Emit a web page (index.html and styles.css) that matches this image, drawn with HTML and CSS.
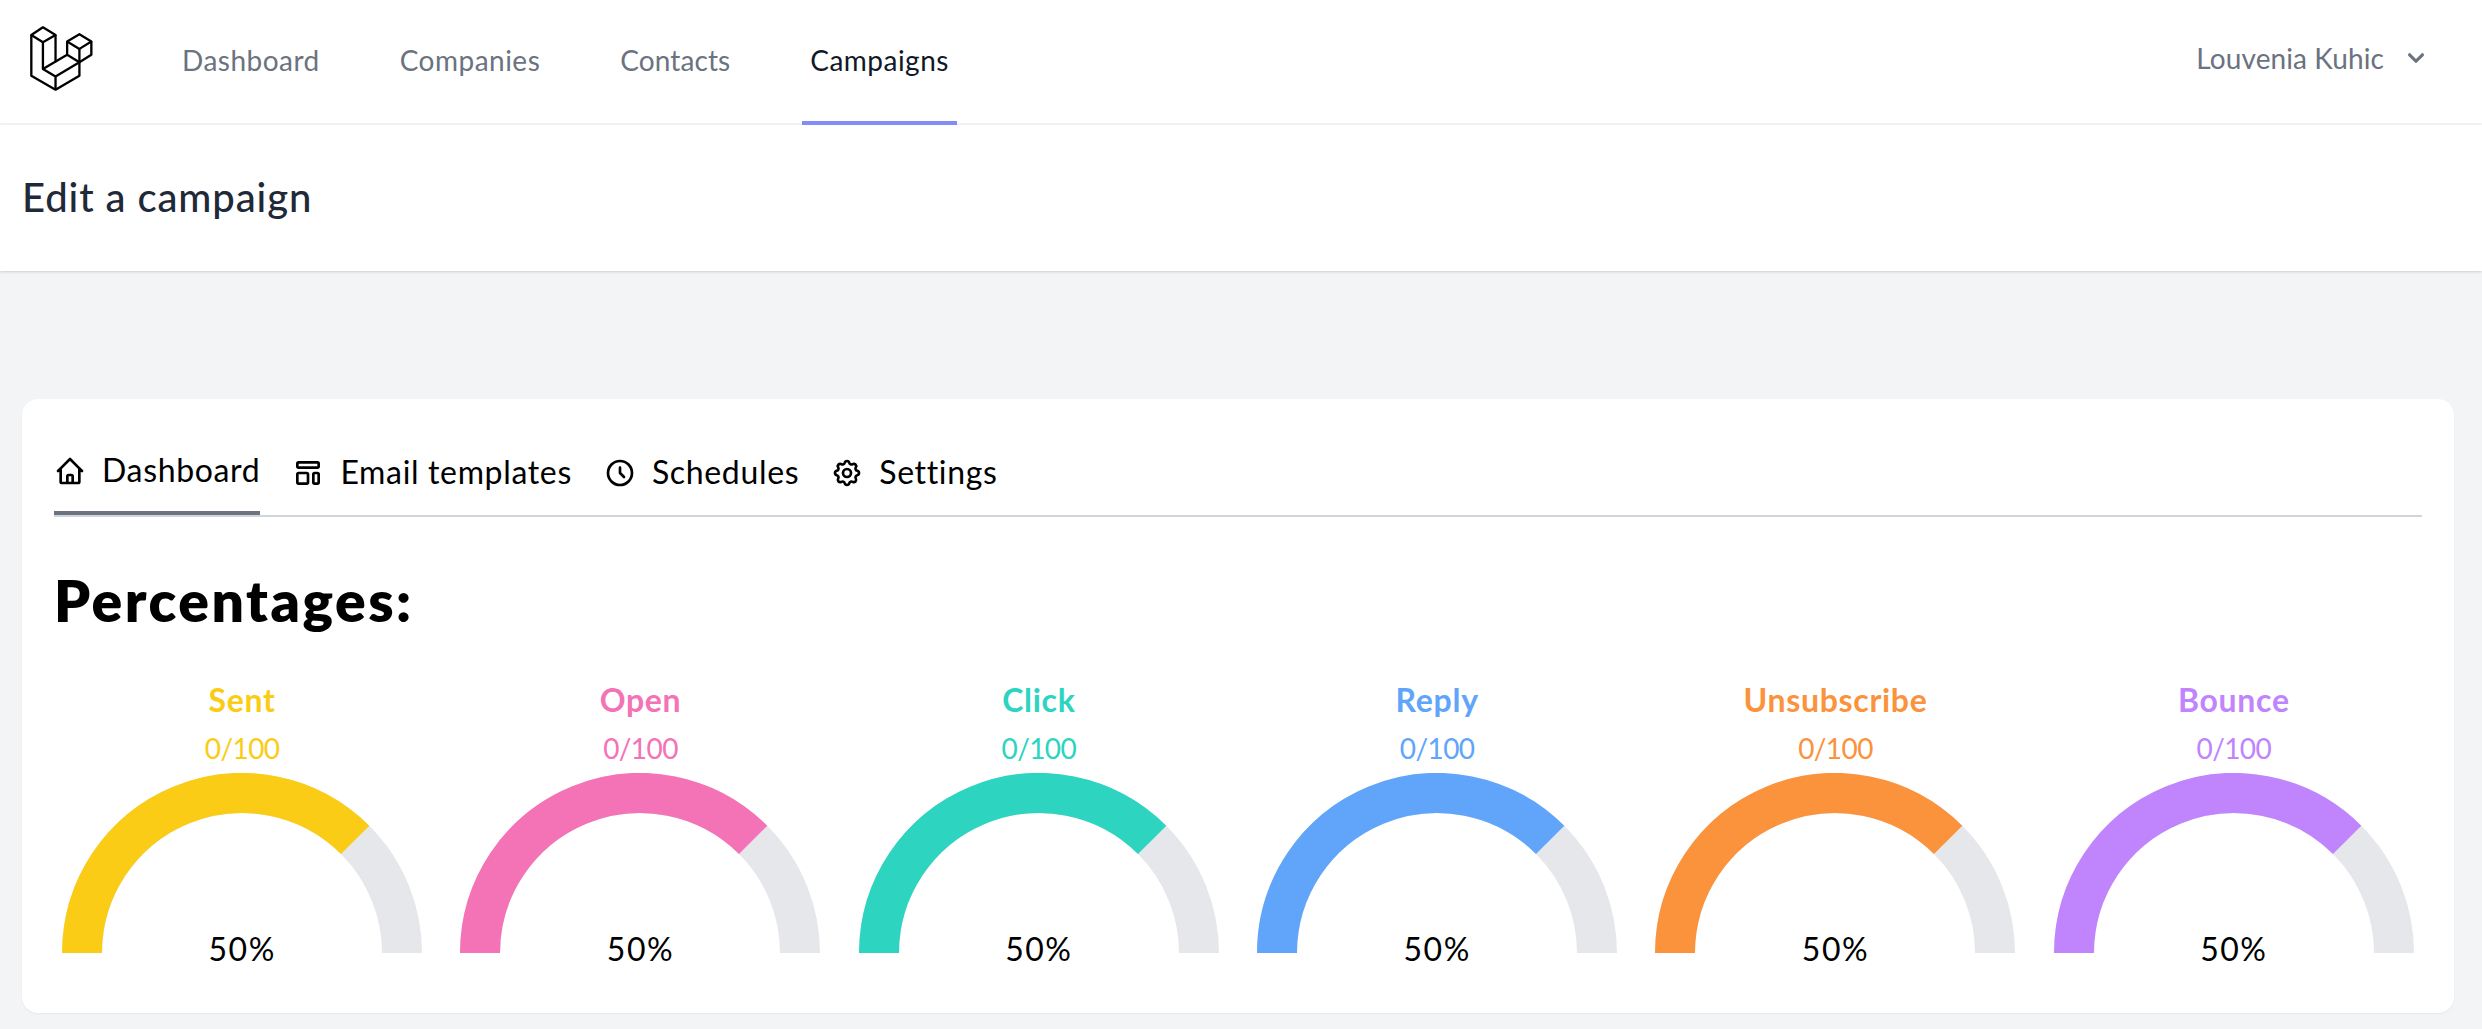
FILE: index.html
```html
<!DOCTYPE html>
<html lang="en">
<head>
    <meta charset="UTF-8">
    <meta name="viewport" content="width=device-width, initial-scale=1.0">
    <title>Edit a campaign</title>
    <link rel="stylesheet" href="styles.css">
</head>
<body>
    <nav class="top-nav">
        <svg class="logo" viewBox="88 78 190 196" fill="none" stroke="#000" stroke-width="7" stroke-linejoin="round">
            <path d="M127 82L165 105L127 127L92 105Z"/>
            <path d="M92 105V228L165 270L237 228V187"/>
            <path d="M127 127V208L165 230V270"/>
            <path d="M165 105V187"/>
            <path d="M127 208L200 165"/>
            <path d="M165 230L237 187"/>
            <path d="M237 103L273 125L237 147L200 125Z"/>
            <path d="M200 125V165L237 187L273 165V125"/>
            <path d="M237 147V187"/>
        </svg>
        <div class="nav-links">
            <a class="nav-link" href="#">Dashboard</a>
            <a class="nav-link" href="#">Companies</a>
            <a class="nav-link contacts" href="#">Contacts</a>
            <a class="nav-link active" href="#">Campaigns</a>
        </div>
        <div class="user-menu">
            <span>Louvenia Kuhic</span>
            <svg class="chevron" viewBox="0 0 20 20" fill="currentColor">
                <path fill-rule="evenodd" clip-rule="evenodd" d="M5.293 7.293a1 1 0 011.414 0L10 10.586l3.293-3.293a1 1 0 111.414 1.414l-4 4a1 1 0 01-1.414 0l-4-4a1 1 0 010-1.414z"/>
            </svg>
        </div>
    </nav>

    <header class="page-header">
        <h1>Edit a campaign</h1>
    </header>

    <main class="content">
        <section class="card">
            <div class="tabs">
                <a class="tab active" href="#">
                    <svg class="tab-icon" viewBox="0 0 24 24"><path d="M3 12l2-2m0 0l7-7 7 7M5 10v10a1 1 0 001 1h3m10-11l2 2m-2-2v10a1 1 0 01-1 1h-3m-6 0a1 1 0 001-1v-4a1 1 0 011-1h2a1 1 0 011 1v4a1 1 0 001 1m-6 0h6"/></svg>
                    <span class="tab-text">Dashboard</span>
                </a>
                <a class="tab" href="#">
                    <svg class="tab-icon" viewBox="0 0 24 24"><path d="M4 5a1 1 0 011-1h14a1 1 0 011 1v2a1 1 0 01-1 1H5a1 1 0 01-1-1V5zM4 13a1 1 0 011-1h6a1 1 0 011 1v6a1 1 0 01-1 1H5a1 1 0 01-1-1v-6zM16 13a1 1 0 011-1h2a1 1 0 011 1v6a1 1 0 01-1 1h-2a1 1 0 01-1-1v-6z"/></svg>
                    <span class="tab-text">Email templates</span>
                </a>
                <a class="tab" href="#">
                    <svg class="tab-icon" viewBox="0 0 24 24"><path d="M12 8v4l3 3m6-3a9 9 0 11-18 0 9 9 0 0118 0z"/></svg>
                    <span class="tab-text">Schedules</span>
                </a>
                <a class="tab" href="#">
                    <svg class="tab-icon" viewBox="0 0 24 24"><path d="M10.325 4.317c.426-1.756 2.924-1.756 3.35 0a1.724 1.724 0 002.573 1.066c1.543-.94 3.31.826 2.37 2.37a1.724 1.724 0 001.065 2.572c1.756.426 1.756 2.924 0 3.35a1.724 1.724 0 00-1.066 2.573c.94 1.543-.826 3.31-2.37 2.37a1.724 1.724 0 00-2.572 1.065c-.426 1.756-2.924 1.756-3.35 0a1.724 1.724 0 00-2.573-1.066c-1.543.94-3.31-.826-2.37-2.37a1.724 1.724 0 00-1.065-2.572c-1.756-.426-1.756-2.924 0-3.35a1.724 1.724 0 001.066-2.573c-.94-1.543.826-3.31 2.37-2.37.996.608 2.296.07 2.572-1.065z"/><path d="M15 12a3 3 0 11-6 0 3 3 0 016 0z"/></svg>
                    <span class="tab-text">Settings</span>
                </a>
            </div>

            <h2 class="section-title">Percentages:</h2>

            <div class="gauges">
                <div class="gauge-item sent">
                    <div class="gauge-label">Sent</div>
                    <div class="gauge-count">0/100</div>
                    <div class="gauge">
                        <svg viewBox="0 0 360 180" fill="none" stroke-width="40">
                            <path class="track" d="M20 180A160 160 0 0 1 340 180"/>
                            <path class="fill" d="M20 180A160 160 0 0 1 293.14 66.86"/>
                        </svg>
                        <span class="gauge-value">50%</span>
                    </div>
                </div>
                <div class="gauge-item open">
                    <div class="gauge-label">Open</div>
                    <div class="gauge-count">0/100</div>
                    <div class="gauge">
                        <svg viewBox="0 0 360 180" fill="none" stroke-width="40">
                            <path class="track" d="M20 180A160 160 0 0 1 340 180"/>
                            <path class="fill" d="M20 180A160 160 0 0 1 293.14 66.86"/>
                        </svg>
                        <span class="gauge-value">50%</span>
                    </div>
                </div>
                <div class="gauge-item click">
                    <div class="gauge-label">Click</div>
                    <div class="gauge-count">0/100</div>
                    <div class="gauge">
                        <svg viewBox="0 0 360 180" fill="none" stroke-width="40">
                            <path class="track" d="M20 180A160 160 0 0 1 340 180"/>
                            <path class="fill" d="M20 180A160 160 0 0 1 293.14 66.86"/>
                        </svg>
                        <span class="gauge-value">50%</span>
                    </div>
                </div>
                <div class="gauge-item reply">
                    <div class="gauge-label">Reply</div>
                    <div class="gauge-count">0/100</div>
                    <div class="gauge">
                        <svg viewBox="0 0 360 180" fill="none" stroke-width="40">
                            <path class="track" d="M20 180A160 160 0 0 1 340 180"/>
                            <path class="fill" d="M20 180A160 160 0 0 1 293.14 66.86"/>
                        </svg>
                        <span class="gauge-value">50%</span>
                    </div>
                </div>
                <div class="gauge-item unsubscribe">
                    <div class="gauge-label">Unsubscribe</div>
                    <div class="gauge-count">0/100</div>
                    <div class="gauge">
                        <svg viewBox="0 0 360 180" fill="none" stroke-width="40">
                            <path class="track" d="M20 180A160 160 0 0 1 340 180"/>
                            <path class="fill" d="M20 180A160 160 0 0 1 293.14 66.86"/>
                        </svg>
                        <span class="gauge-value">50%</span>
                    </div>
                </div>
                <div class="gauge-item bounce">
                    <div class="gauge-label">Bounce</div>
                    <div class="gauge-count">0/100</div>
                    <div class="gauge">
                        <svg viewBox="0 0 360 180" fill="none" stroke-width="40">
                            <path class="track" d="M20 180A160 160 0 0 1 340 180"/>
                            <path class="fill" d="M20 180A160 160 0 0 1 293.14 66.86"/>
                        </svg>
                        <span class="gauge-value">50%</span>
                    </div>
                </div>
            </div>
        </section>
    </main>
</body>
</html>
```

FILE: styles.css
```css
* {
    box-sizing: border-box;
}
body {
    margin: 0;
    min-height: 1029px;
    font-family: Lato, "Open Sans", sans-serif;
    background-color: #f3f4f6;
    color: #000;
}
a {
    text-decoration: none;
    color: inherit;
}

/* top bar */
.top-nav {
    display: flex;
    height: 125px;
    padding: 0 50px 0 30px;
    background-color: #fff;
    border-bottom: 2px solid #f3f4f6;
}
.logo {
    width: 63px;
    height: 65px;
    margin-top: 26px;
}
.nav-links {
    display: flex;
    gap: 64px;
    margin-left: 81px;
}
.nav-link {
    height: 125px;
    padding: 0 8px;
    border-bottom: 4px solid transparent;
    font-size: 28px;
    letter-spacing: 0.48px;
    line-height: 121px;
    color: #6b7280;
}
.nav-link.contacts {
    letter-spacing: 0.1px;
}
.nav-link.active {
    color: #111827;
    border-bottom-color: #818cf8;
}
.user-menu {
    display: flex;
    align-items: center;
    gap: 16px;
    height: 116px;
    margin-left: auto;
    font-size: 28px;
    letter-spacing: 0.1px;
    color: #6b7280;
}
.chevron {
    width: 32px;
    height: 32px;
}

.page-header {
    height: 146px;
    padding: 0 22px;
    background-color: #fff;
    box-shadow: 0 1px 3px rgba(0, 0, 0, 0.1), 0 1px 2px rgba(0, 0, 0, 0.06);
}
.page-header h1 {
    margin: 0;
    font-size: 40px;
    font-weight: 500;
    letter-spacing: 0.9px;
    line-height: 144px;
    color: #1f2937;
}

.content {
    padding: 128px 28px 0 22px;
}
.card {
    height: 614px;
    padding: 32px;
    background-color: #fff;
    border-radius: 16px;
    box-shadow: 0 1px 2px rgba(0, 0, 0, 0.05);
}

/* tabs */
.tabs {
    display: flex;
    gap: 32px;
    height: 86px;
    border-bottom: 2px solid #d1d5db;
}
.tab {
    display: flex;
    align-items: center;
    height: 84px;
    font-size: 32px;
    letter-spacing: 0.66px;
}
.tab.active {
    border-bottom: 4px solid #6b7280;
}
.tab-text {
    margin-bottom: 3px;
}
.tab-icon {
    width: 32px;
    height: 32px;
    margin-right: 16px;
    fill: none;
    stroke: #000;
    stroke-width: 2;
    stroke-linecap: round;
    stroke-linejoin: round;
}

.section-title {
    margin: 47px 0 0;
    font-size: 57px;
    font-weight: 800;
    letter-spacing: 2.5px;
    line-height: 72px;
}

/* gauges */
.gauges {
    display: grid;
    grid-template-columns: repeat(6, 1fr);
    gap: 22px;
    margin-top: 42px;
}
.gauge-item {
    text-align: center;
}
.gauge-label {
    font-size: 32px;
    font-weight: 700;
    letter-spacing: 0.7px;
    line-height: 44px;
}
.gauge-count {
    margin-top: 4px;
    font-size: 28px;
    letter-spacing: -0.6px;
    line-height: 44px;
}
.gauge {
    position: relative;
    width: 360px;
    height: 180px;
    margin: 3px auto 0;
}
.gauge svg {
    display: block;
    width: 360px;
    height: 180px;
}
.gauge-value {
    position: absolute;
    left: 0;
    right: 0;
    bottom: -20px;
    font-size: 32px;
    letter-spacing: 1.5px;
    line-height: 48px;
    color: #000;
}
.track {
    stroke: #e5e7eb;
}
.fill {
    stroke: currentColor;
}

.sent { color: #facc15; }
.open { color: #f472b6; }
.click { color: #2dd4bf; }
.reply { color: #60a5fa; }
.unsubscribe { color: #fb923c; }
.bounce { color: #c084fc; }
```
